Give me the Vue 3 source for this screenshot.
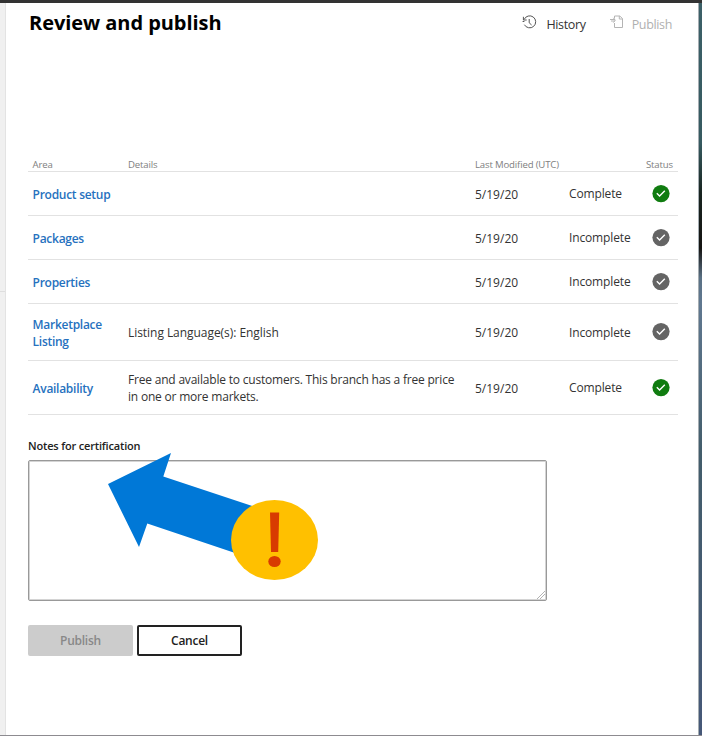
<script setup>
const rows = [
  { area: ['Product setup'], details: [], status: 'Complete', height: 44 },
  { area: ['Packages'], details: [], status: 'Incomplete', height: 44 },
  { area: ['Properties'], details: [], status: 'Incomplete', height: 44 },
  { area: ['Marketplace', 'Listing'], details: ['Listing Language(s): English'], status: 'Incomplete', height: 57 },
  {
    area: ['Availability'],
    details: ['Free and available to customers. This branch has a free price', 'in one or more markets.'],
    status: 'Complete',
    height: 54,
  },
]
</script>

<template>
  <div class="window">
    <div class="topbar"></div>
    <div class="body">
      <div class="rail"><div class="rail-top"></div></div>
      <main class="page">
        <header class="head">
          <h1>Review and publish</h1>
          <div class="actions">
            <a class="action">
              <svg class="ic-history" width="15" height="15" viewBox="0 0 15 15" fill="none" stroke="#555" stroke-width="1">
                <path d="M2.2 4.4A6 6 0 1 1 2.4 9.700" />
                <path d="M1.400 1.800v3.200h3.300" />
                <path d="M.6 6.500h1.800" />
                <path d="M7.200 4v3.800l2.400 2.200" />
              </svg>
              <span>History</span>
            </a>
            <a class="action off">
              <svg class="ic-pub" width="13" height="14" viewBox="0 0 13 14" fill="none" stroke="#b4b4b4" stroke-width="1">
                <path d="M4.500 8v4.500h8v-9L9.700 1H4.500v2.500" />
                <path d="M9.300 1v3h3.200" />
                <path d="M0 4.500h5M1 6h4M3.300 2.800l2 2.400-2 2.400" />
              </svg>
              <span>Publish</span>
            </a>
          </div>
        </header>

        <section class="table">
          <div class="row th">
            <span class="h-area">Area</span><span>Details</span><span>Last Modified (UTC)</span><span></span><span class="h-status">Status</span>
          </div>
          <div v-for="(r, i) in rows" :key="i" class="row" :style="{ height: r.height + 'px' }">
            <a class="area"><span v-for="l in r.area" :key="l">{{ l }}</span></a>
            <div class="details" :class="{ long: r.details.length > 1 }"><span v-for="l in r.details" :key="l">{{ l }}</span></div>
            <span class="date">5/19/20</span>
            <span class="state">{{ r.status }}</span>
            <svg class="check" width="18" height="18" viewBox="0 0 18 18">
              <circle cx="9" cy="8.600" r="8.600" :fill="r.status === 'Complete' ? '#107c10' : '#646464'" />
              <path d="M4.800 8.200l2.800 2.800 5.200-5.200" fill="none" stroke="#fff" stroke-width="1.400" />
            </svg>
          </div>
        </section>

        <label class="label">Notes for certification</label>
        <div class="notes">
          <svg class="grip" width="8" height="8" viewBox="0 0 8 8" stroke="#aaa" stroke-width=".9"><path d="M0 8L8 0M3 8l5-5" /></svg>
          <svg class="callout" width="212" height="130" viewBox="0 0 212 130">
            <path d="M0 32L63 1L55.3 24.500L150 56L136 104L39.3 71.500L31 95Z" fill="#0078d7" />
            <ellipse cx="166.500" cy="88" rx="43.500" ry="40" fill="#ffc000" />
            <path d="M162 60.500h9.200l-1 39.500h-7.200z" fill="#d83b01" />
            <ellipse cx="166.500" cy="109.500" rx="6.200" ry="5.600" fill="#d83b01" />
          </svg>
        </div>
        <div class="buttons">
          <button class="btn primary">Publish</button>
          <button class="btn">Cancel</button>
        </div>
      </main>
      <div class="edge"></div>
    </div>
  </div>
</template>

<style>
body { margin: 0; overflow: hidden; }
</style>
<style scoped>
.window { width: 702px; height: 736px; box-sizing: border-box; display: flex; flex-direction: column; font-family: "Open Sans", "Noto Sans", sans-serif; color: #333; background: #fff; border-bottom: 1px solid #8d8b90; }
.topbar { height: 3px; background: #333; flex: none; }
.body { flex: 1; display: flex; min-height: 0; }
.rail { width: 6px; box-sizing: border-box; background: #f0f0f0; border-right: 1px solid #e3e3e3; }
.rail-top { height: 289px; box-sizing: border-box; border-bottom: 1px solid #dedede; }
.page { flex: 1; padding-left: 22px; }
.edge { width: 4px; box-sizing: border-box; border-left: 1px solid #a5adb2; background: linear-gradient(#3c6068 0, #365a60 140px, #182420 190px, #151412 245px, #5a7185 275px, #607890 300px, #435d6b 450px, #465878 100%); }
.head { height: 150px; display: flex; justify-content: space-between; }
h1 { margin: 6px 0 0 1px; font-size: 20px; line-height: 28px; font-weight: 700; color: #000; letter-spacing: -0.05px; white-space: nowrap; }
.actions { display: flex; margin-right: 26px; gap: 24px; height: 45px; }
.action { display: flex; font-size: 12.500px; line-height: 18px; color: #333; letter-spacing: -0.35px; }
.action span { margin-top: 13px; }
.off { color: #b0b0b0; }
.ic-history { margin: 12px 9px 0 0; }
.ic-pub { margin: 12px 9px 0 0; }
.row { width: 650px; box-sizing: border-box; display: grid; grid-template-columns: 100px 347px 94px 83px 26px; align-items: center; border-bottom: 1px solid #e2e2e2; font-size: 12px; line-height: 17px; white-space: nowrap; }
.th { height: 19px; padding-top: 6px; font-size: 9.600px; line-height: 12px; color: #808080; letter-spacing: -0.16px; }
.area { padding: 1px 0 0 4.600px; display: flex; flex-direction: column; color: #2671be; font-weight: 600; letter-spacing: -0.28px; }
.h-area { padding-left: 4.600px; }
.h-status { margin-left: -6px; }
.details { display: flex; flex-direction: column; letter-spacing: -0.05px; }
.long { letter-spacing: -0.2px; }
.date { padding-top: 1px; }
.state { letter-spacing: -0.14px; }
.label { display: block; margin-top: 22px; margin-bottom: 5px; font-size: 11px; line-height: 18px; font-weight: 600; color: #222; letter-spacing: -0.18px; }
.notes { position: relative; width: 519px; height: 141px; box-sizing: border-box; border: 1px solid #999; box-shadow: inset 0 0 0 1px #d4d4d4; border-radius: 2px; }
.grip { position: absolute; right: 1px; bottom: 1px; }
.callout { position: absolute; left: 79px; top: -9px; }
.buttons { display: flex; gap: 4px; margin-top: 24px; }
.btn { width: 105px; height: 31px; padding: 0; box-sizing: border-box; border: 2px solid #222; border-radius: 2px; background: #fff; font: 600 12px/18px "Open Sans", sans-serif; color: #222; letter-spacing: -0.25px; }
.primary { background: #ccc; border-color: #ccc; color: #888; }
</style>
